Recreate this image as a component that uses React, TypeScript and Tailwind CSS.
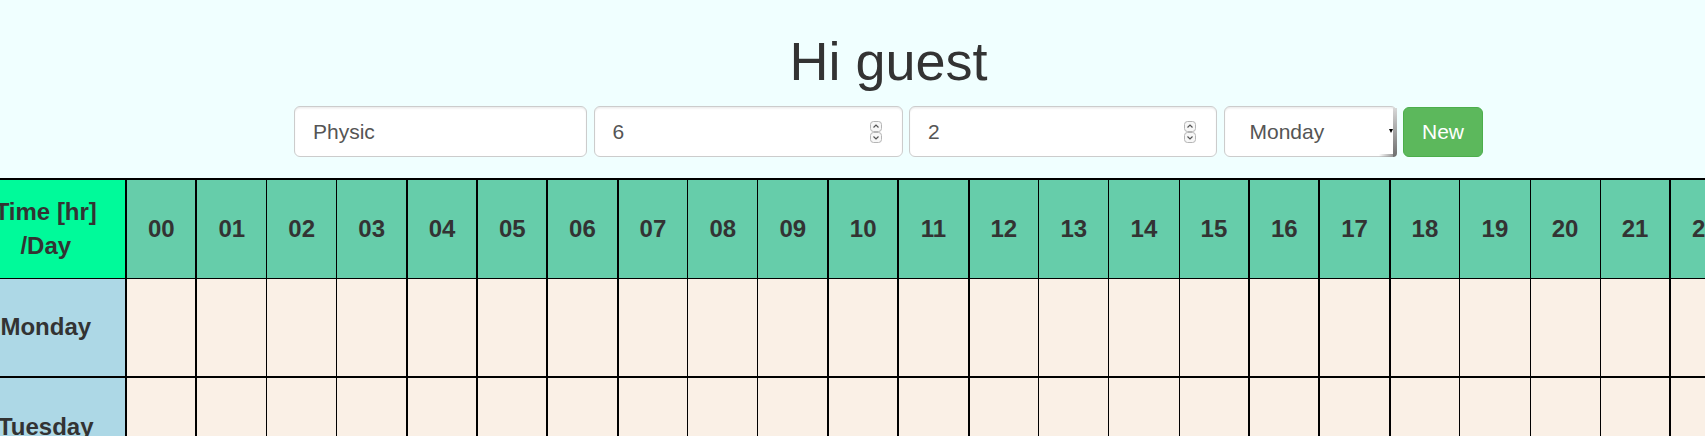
import { useState } from "react";

const HOURS = Array.from({ length: 24 }, (_, i) => String(i).padStart(2, "0"));

const DAYS = ["Monday", "Tuesday", "Wednesday", "Thursday", "Friday", "Saturday", "Sunday"];

// grid lines in the picture come out 1px or 2px depending on where they fall
const THICK = Array.from({ length: 25 }, (_, k) => {
  const f = (k * 0.17 + 0.05) % 1;
  return f < 0.25 || f >= 0.7;
});

// row lines: top of header, header/Monday, Monday/Tuesday, ...
const ROW_THICK = [true, false, true, true, false, true, true, false];


function Spinner() {
  return (
    <svg width="12" height="22" viewBox="0 0 12 22" className="absolute right-[21px] top-1/2 -translate-y-1/2 pointer-events-none">
      <rect x="0.5" y="0.5" width="11" height="10" rx="3" fill="#f7f7f7" stroke="#b5b5b5" />
      <rect x="0.5" y="11.5" width="11" height="10" rx="3" fill="#f7f7f7" stroke="#b5b5b5" />
      <path d="M3.5 6.5 L6 4 L8.5 6.5" fill="none" stroke="#555" strokeWidth="1.2" />
      <path d="M3.5 15.5 L6 18 L8.5 15.5" fill="none" stroke="#555" strokeWidth="1.2" />
    </svg>
  );
}


function cellBorder(h: number, row: number) {
  return [
    "border-black",
    THICK[h] ? "border-l-2" : "border-l",
    THICK[h + 1] ? "border-r-2" : "border-r",
    ROW_THICK[row] ? "border-t-2" : "border-t",
    ROW_THICK[row + 1] ? "border-b-2" : "border-b",
  ].join(" ");
}


function dayBorder(row: number) {
  return [
    "border-black border-l",
    THICK[0] ? "border-r-2" : "border-r",
    ROW_THICK[row] ? "border-t-2" : "border-t",
    ROW_THICK[row + 1] ? "border-b-2" : "border-b",
  ].join(" ");
}


export default function App() {

  const [name, setName] = useState("Physic");

  const [start, setStart] = useState("6");

  const [length, setLength] = useState("2");

  const [day, setDay] = useState("Monday");


  const inputCls =
    "h-[51px] rounded-[6px] border border-[#ccc] bg-white px-[18px] text-[21px] text-[#555] outline-none shadow-[inset_0_1.5px_1.5px_rgba(0,0,0,0.075)]";


  return (
    <div className="h-screen w-full overflow-hidden bg-[#f0ffff] font-['Liberation_Sans',Arial,sans-serif] text-[#333]">

      <div className="w-[1777px] flex flex-col items-center pt-[32px]">

        {/* TITLE */}

        <h1 className="text-[54px] leading-[59px] font-normal mb-[15px]">Hi guest</h1>


        {/* FORM */}

        <div className="flex items-center gap-[6.5px]">

          <input value={name} onChange={(e) => setName(e.target.value)} className={`${inputCls} w-[293px]`} />

          <div className="relative">
            <input value={start} onChange={(e) => setStart(e.target.value)} className={`${inputCls} w-[309px]`} />
            <Spinner />
          </div>

          <div className="relative">
            <input value={length} onChange={(e) => setLength(e.target.value)} className={`${inputCls} w-[308px]`} />
            <Spinner />
          </div>

          <div className="relative h-[51px] w-[173px]">
            <select
              value={day}
              onChange={(e) => setDay(e.target.value)}
              className="appearance-none h-full w-full rounded-[6px] border border-[#ccc] bg-white pl-[25px] text-[21px] text-[#555] outline-none shadow-[inset_0_1.5px_1.5px_rgba(0,0,0,0.075)]"
            >
              {DAYS.map((d) => (
                <option key={d}>{d}</option>
              ))}
            </select>
            <div className="absolute right-0 top-[2px] bottom-0 w-[4px] rounded-br-[6px] bg-gradient-to-b from-[#d8d8d8] to-[#6e6e6e] pointer-events-none" />
            <div className="absolute right-[4px] bottom-0 h-[3px] w-[14px] bg-gradient-to-r from-transparent to-[#9a9a9a] pointer-events-none" />
            <div className="absolute right-[4px] top-[23px] w-0 h-0 border-l-[2.5px] border-r-[2.5px] border-t-[4px] border-l-transparent border-r-transparent border-t-black pointer-events-none" />
          </div>

          <button className="h-[50px] w-[80px] rounded-[6px] border border-[#4cae4c] bg-[#5cb85c] text-[21px] text-white">
            New
          </button>

        </div>


        {/* TIMETABLE */}

        <table className="mt-[21px] shrink-0 table-fixed border-collapse w-[1845px]">

          <colgroup>
            <col className="w-[160.5px]" />
            {HOURS.map((h) => (
              <col key={h} className="w-[70.19px]" />
            ))}
          </colgroup>

          <thead>
            <tr className="h-[99px]">
              <th className={`${dayBorder(0)} bg-[#00fa9a] text-[24px] leading-[34px] font-bold`}>
                Time [hr]
                <br />
                /Day
              </th>
              {HOURS.map((h, i) => (
                <th key={h} className={`${cellBorder(i, 0)} bg-[#66cdaa] text-[24px] font-bold`}>
                  {h}
                </th>
              ))}
            </tr>
          </thead>

          <tbody>
            {DAYS.map((d, r) => (
              <tr key={d} className="h-[99px]">
                <td className={`${dayBorder(r + 1)} bg-[#add8e6] text-center text-[24px] font-bold`}>{d}</td>
                {HOURS.map((h, i) => (
                  <td key={h} className={`${cellBorder(i, r + 1)} bg-[#faf0e6]`} />
                ))}
              </tr>
            ))}
          </tbody>

        </table>

      </div>

    </div>
  );
}
